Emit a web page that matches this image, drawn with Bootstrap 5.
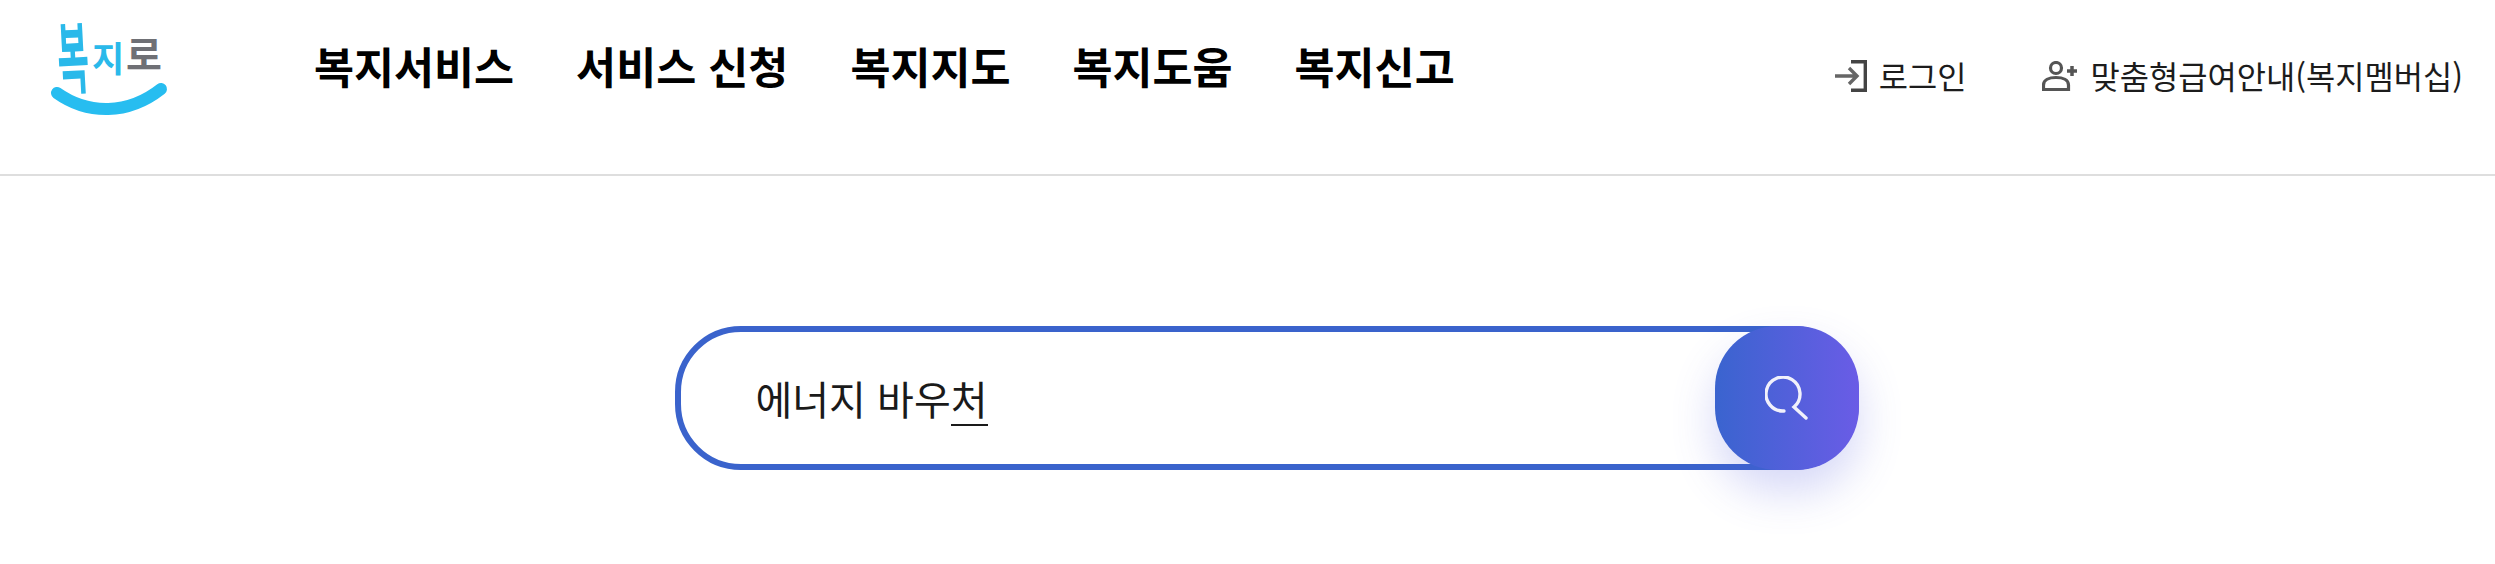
<!DOCTYPE html>
<html lang="ko">
<head>
<meta charset="utf-8">
<title>복지로</title>
<link href="https://cdn.jsdelivr.net/npm/bootstrap@5.3.0/dist/css/bootstrap.min.css" rel="stylesheet">
<style>
body{background:#fff;color:#111;font-family:"Noto Sans CJK KR","Noto Sans",sans-serif;min-height:564px}
.site-head{height:176px;border-bottom:2px solid #dedede;padding:0 32px 0 48px}
.site-logo{width:266px;height:130px;margin-top:-20px}
.site-logo svg{display:block;overflow:visible}
.logo-ink{font-family:"Noto Sans CJK KR",sans-serif}
.main-menu{gap:62px;margin-top:-41px}
.main-menu a{font-size:43.5px;font-weight:700;color:#000;text-decoration:none;line-height:1.2}
.util-menu{gap:76px;margin-top:-23px}
.util-menu a{font-size:31.8px;color:#1c1c1c;text-decoration:none;line-height:1.2;gap:12px}
.search-wrap{padding-top:150px}
.search-shell{width:1184px;height:144px;border:6px solid #3a63cc;border-radius:66px;background:#fff;padding:2px 0 0 75px;margin-left:38px}
.search-value{font-size:40px;line-height:1.3;color:#1a1a1a}
.ime-char{display:inline-block;border-bottom:2px solid #1a1a1a;line-height:1.3}
.search-go{width:144px;height:144px;border-radius:62px;border:0;padding:0;background:linear-gradient(90deg,#3a64cf,#6a5ce6);box-shadow:0 22px 44px rgba(84,90,220,.24);top:-6px;right:-6px}
</style>
</head>
<body>
<header class="site-head d-flex align-items-center">
  <a class="site-logo d-block" href="#" aria-label="복지로">
    <svg width="130" height="130" viewBox="0 0 130 130">
      <text class="logo-ink" font-size="34" font-weight="700" fill="#2ab9ea" transform="translate(11 76) rotate(-3) scale(1 2.3)">복</text>
      <text class="logo-ink" x="44" y="60" font-size="35" font-weight="700" fill="#2ab9ea">지</text>
      <text class="logo-ink" x="78" y="57" font-size="39" font-weight="700" fill="#6f7075">로</text>
      <path d="M9 81C40 103 80 103 113 77" fill="none" stroke="#27bdf0" stroke-width="12" stroke-linecap="round"/>
    </svg>
  </a>
  <nav class="main-menu d-flex align-items-center">
    <a href="#">복지서비스</a><a href="#">서비스 신청</a><a href="#">복지지도</a><a href="#">복지도움</a><a href="#">복지신고</a>
  </nav>
  <div class="util-menu d-flex align-items-center ms-auto">
    <a href="#" class="d-flex align-items-center">
      <svg width="32" height="32" viewBox="0 0 32 32" fill="none" stroke="#555" stroke-width="3.4"><path d="M16 1.700H30.300V30.300H16" stroke="#444"/><path d="M0 16H22M14 8l8 8-8 8" stroke="#666"/></svg>로그인
    </a>
    <a href="#" class="d-flex align-items-center">
      <svg width="36" height="30" viewBox="0 0 36 30" fill="none" stroke="#555" stroke-width="3.2"><circle cx="14" cy="7" r="5.500"/><path d="M1.500 28.500V24C1.500 19 7 16.500 14 16.500S26.500 19 26.500 24V28.500Z"/><path d="M30 5V15M25 10H35" stroke-width="3.500"/></svg>맞춤형급여안내(복지멤버십)
    </a>
  </div>
</header>
<main class="search-wrap d-flex justify-content-center">
  <div class="search-shell position-relative d-flex align-items-center">
    <div class="search-value">에너지 바우<span class="ime-char">처</span></div>
    <button class="search-go position-absolute d-flex align-items-center justify-content-center" aria-label="검색">
      <svg width="44" height="44" viewBox="0 0 44 44" fill="none" stroke="#f1f1fb" stroke-width="3.400" stroke-linecap="round"><path d="M19 35A17 17 0 1 1 29 31L41 42"/></svg>
    </button>
  </div>
</main>
</body>
</html>
